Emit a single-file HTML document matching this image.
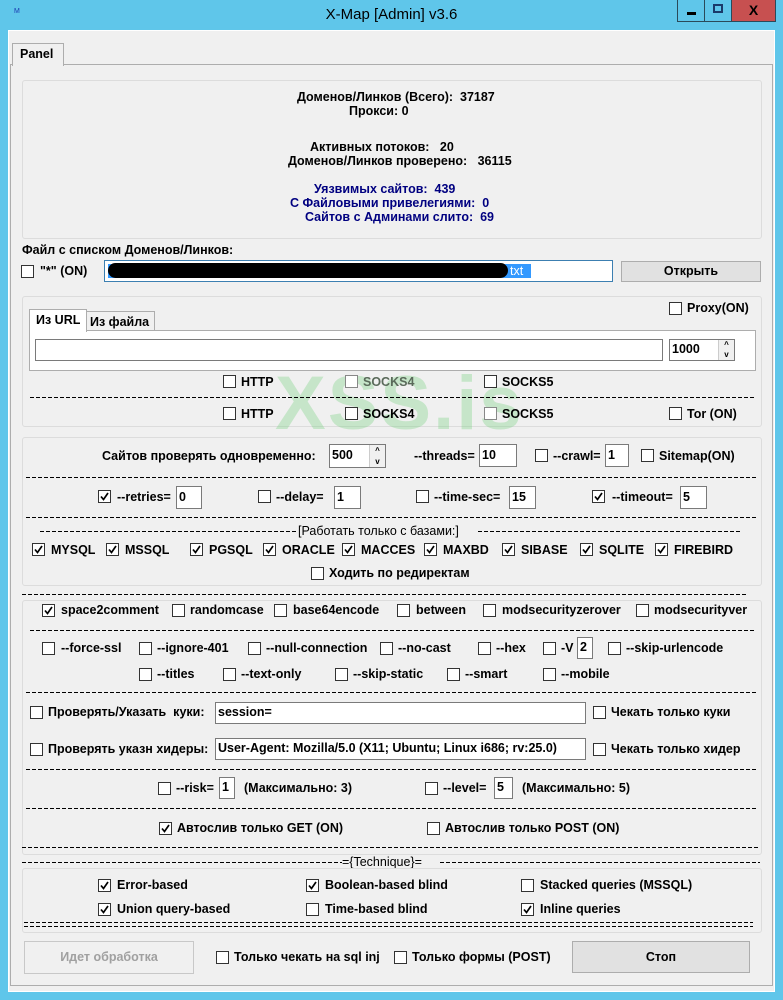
<!DOCTYPE html>
<html><head><meta charset="utf-8"><style>
*{margin:0;padding:0;box-sizing:border-box}
body{width:783px;height:1000px;background:#5fc6ea;position:relative;overflow:hidden;font:bold 12.5px "Liberation Sans","Noto Sans CJK SC",sans-serif;color:#000}
div{position:absolute}
.t{white-space:nowrap;line-height:14px}
.b{color:#000080}
.cb{width:13px;height:13px;border:1px solid #333;background:#fff}
.cb svg{position:absolute;left:0;top:0}
.in{background:#fff;border:1px solid #7a7a7a;line-height:18px;padding-left:2px;white-space:nowrap;overflow:hidden}
.grp{border:1px solid #dcdcdc;border-radius:3px}
.dl{height:1px;background:repeating-linear-gradient(90deg,#000 0 4px,transparent 4px 6px)}
.btn{background:#e1e1e1;border:1px solid #adadad;text-align:center}
.wm{font:bold 76px "Liberation Sans",sans-serif;color:rgba(120,210,130,.35);letter-spacing:2px}
</style></head><body>
<div style="left:14px;top:8px;font:7px 'Liberation Sans';color:#1a3ab0">M</div>
<div class="t" style="left:0;width:783px;top:6px;text-align:center;font:normal 15px 'Liberation Sans',sans-serif;line-height:18px">X-Map [Admin] v3.6</div>
<div style="left:677px;top:0;width:28px;height:22px;border:1px solid #2a4a5a;border-top:none"><div style="left:9px;top:12px;width:9px;height:3px;background:#000"></div></div>
<div style="left:704px;top:0;width:28px;height:22px;border:1px solid #2a4a5a;border-top:none"><div style="left:8px;top:4px;width:10px;height:9px;border:2px solid #1a3a6a"></div></div>
<div style="left:731px;top:0;width:45px;height:22px;background:#c75050;border:1px solid #2a4a5a;border-top:none;color:#000;font:bold 14px 'Liberation Sans';text-align:center;line-height:21px">X</div>
<div style="left:8px;top:30px;width:767px;height:962px;background:#f0f0f0;border:1px solid #fff"></div>
<div style="left:10px;top:64px;width:763px;height:922px;border:1px solid #adadad;background:#f0f0f0"></div>
<div style="left:12px;top:43px;width:52px;height:23px;background:#f0f0f0;border:1px solid #adadad;border-bottom:none"></div>
<div class="t" style="left:20px;top:47px">Panel</div>
<div style="left:16px;top:66px;width:752px;height:916px;background:#f0f0f0"></div>

<div class="grp" style="left:22px;top:80px;width:740px;height:159px"></div>
<div class="t" style="left:297px;top:90px">Доменов/Линков (Всего):&nbsp; 37187</div>
<div class="t" style="left:349px;top:104px">Прокси: 0</div>
<div class="t" style="left:310px;top:140px">Активных потоков:&nbsp;&nbsp; 20</div>
<div class="t" style="left:288px;top:154px">Доменов/Линков проверено:&nbsp;&nbsp; 36115</div>
<div class="t b" style="left:314px;top:182px">Уязвимых сайтов:&nbsp; 439</div>
<div class="t b" style="left:290px;top:196px">С Файловыми привелегиями:&nbsp; 0</div>
<div class="t b" style="left:305px;top:210px">Сайтов с Админами слито:&nbsp; 69</div>

<div class="t" style="left:22px;top:243px">Файл с списком Доменов/Линков:</div>
<div class="cb" style="left:21px;top:265px"></div>
<div class="t" style="left:40px;top:264px">"*" (ON)</div>
<div style="left:104px;top:260px;width:509px;height:22px;background:#fff;border:1px solid #3c7fb1"></div>
<div style="left:108px;top:264px;width:423px;height:14px;background:#3399ff"></div>
<div style="left:108px;top:263px;width:400px;height:15px;background:#000;border-radius:8px"></div>
<div class="t" style="left:510px;top:264px;color:#fff;font-weight:normal">txt</div>
<div class="btn t" style="left:621px;top:261px;width:140px;height:21px;line-height:19px">Открыть</div>

<div class="grp" style="left:22px;top:296px;width:740px;height:131px"></div>
<div class="cb" style="left:669px;top:302px"></div>
<div class="t" style="left:687px;top:301px">Proxy(ON)</div>
<div style="left:29px;top:330px;width:727px;height:41px;background:#fff;border:1px solid #adadad"></div>
<div style="left:86px;top:311px;width:69px;height:20px;background:#f0f0f0;border:1px solid #adadad"></div>
<div class="t" style="left:90px;top:315px">Из файла</div>
<div style="left:29px;top:309px;width:58px;height:23px;background:#fff;border:1px solid #adadad;border-bottom:none"></div>
<div class="t" style="left:36px;top:313px">Из URL</div>
<div class="in" style="left:35px;top:339px;width:628px;height:22px"></div>
<div class="in" style="left:669px;top:339px;width:66px;height:22px;line-height:19px">1000</div>
<div style="left:718px;top:340px;width:16px;height:20px;background:#f0f0f0;border-left:1px solid #ccc;font-size:8px;line-height:10px;text-align:center">^<br>v</div>

<div class="wm" style="left:275px;top:360px">XSS.is</div>
<div class="cb" style="left:223px;top:375px"></div><div class="t" style="left:241px;top:375px">HTTP</div>
<div class="cb" style="left:345px;top:375px;border-color:#888"></div><div class="t" style="left:363px;top:375px;color:#5a6a5a">SOCKS4</div>
<div class="cb" style="left:484px;top:375px"></div><div class="t" style="left:502px;top:375px">SOCKS5</div>
<div class="dl" style="left:30px;top:397px;width:725px"></div>
<div class="cb" style="left:223px;top:407px"></div><div class="t" style="left:241px;top:407px">HTTP</div>
<div class="cb" style="left:345px;top:407px"></div><div class="t" style="left:363px;top:407px">SOCKS4</div>
<div class="cb" style="left:484px;top:407px;border-color:#888"></div><div class="t" style="left:502px;top:407px">SOCKS5</div>
<div class="cb" style="left:669px;top:407px"></div><div class="t" style="left:687px;top:407px">Tor (ON)</div>

<div class="grp" style="left:22px;top:437px;width:740px;height:149px"></div>
<div class="t" style="left:102px;top:449px">Сайтов проверять одновременно:</div>
<div class="in" style="left:329px;top:444px;width:57px;height:24px;line-height:21px">500</div>
<div style="left:369px;top:445px;width:16px;height:22px;background:#f0f0f0;border-left:1px solid #ccc;font-size:8px;line-height:11px;text-align:center">^<br>v</div>
<div class="t" style="left:414px;top:449px">--threads=</div>
<div class="in" style="left:479px;top:444px;width:38px;height:23px;line-height:20px">10</div>
<div class="cb" style="left:535px;top:449px"></div><div class="t" style="left:553px;top:449px">--crawl=</div>
<div class="in" style="left:605px;top:444px;width:24px;height:23px;line-height:20px">1</div>
<div class="cb" style="left:641px;top:449px"></div><div class="t" style="left:659px;top:449px">Sitemap(ON)</div>
<div class="dl" style="left:26px;top:477px;width:730px"></div>

<div class="cb" style="left:98px;top:490px"><svg width="11" height="11"><path d="M2 5.5L4.5 8.5L9 2" stroke="#000" stroke-width="1.7" fill="none"/></svg></div>
<div class="t" style="left:117px;top:490px">--retries=</div>
<div class="in" style="left:176px;top:486px;width:26px;height:23px;line-height:20px">0</div>
<div class="cb" style="left:258px;top:490px"></div><div class="t" style="left:276px;top:490px">--delay=</div>
<div class="in" style="left:334px;top:486px;width:27px;height:23px;line-height:20px">1</div>
<div class="cb" style="left:416px;top:490px"></div><div class="t" style="left:434px;top:490px">--time-sec=</div>
<div class="in" style="left:509px;top:486px;width:27px;height:23px;line-height:20px">15</div>
<div class="cb" style="left:592px;top:490px"><svg width="11" height="11"><path d="M2 5.5L4.5 8.5L9 2" stroke="#000" stroke-width="1.7" fill="none"/></svg></div>
<div class="t" style="left:612px;top:490px">--timeout=</div>
<div class="in" style="left:680px;top:486px;width:27px;height:23px;line-height:20px">5</div>
<div class="dl" style="left:26px;top:517px;width:730px"></div>
<div class="dl" style="left:40px;top:531px;width:258px"></div>
<div class="t" style="left:298px;top:524px;font-weight:normal">[Работать только с базами:]</div>
<div class="dl" style="left:478px;top:531px;width:262px"></div>

<div class="cb" style="left:32px;top:543px"><svg width="11" height="11"><path d="M2 5.5L4.5 8.5L9 2" stroke="#000" stroke-width="1.7" fill="none"/></svg></div><div class="t" style="left:51px;top:543px">MYSQL</div>
<div class="cb" style="left:106px;top:543px"><svg width="11" height="11"><path d="M2 5.5L4.5 8.5L9 2" stroke="#000" stroke-width="1.7" fill="none"/></svg></div><div class="t" style="left:125px;top:543px">MSSQL</div>
<div class="cb" style="left:190px;top:543px"><svg width="11" height="11"><path d="M2 5.5L4.5 8.5L9 2" stroke="#000" stroke-width="1.7" fill="none"/></svg></div><div class="t" style="left:209px;top:543px">PGSQL</div>
<div class="cb" style="left:263px;top:543px"><svg width="11" height="11"><path d="M2 5.5L4.5 8.5L9 2" stroke="#000" stroke-width="1.7" fill="none"/></svg></div><div class="t" style="left:282px;top:543px">ORACLE</div>
<div class="cb" style="left:342px;top:543px"><svg width="11" height="11"><path d="M2 5.5L4.5 8.5L9 2" stroke="#000" stroke-width="1.7" fill="none"/></svg></div><div class="t" style="left:361px;top:543px">MACCES</div>
<div class="cb" style="left:424px;top:543px"><svg width="11" height="11"><path d="M2 5.5L4.5 8.5L9 2" stroke="#000" stroke-width="1.7" fill="none"/></svg></div><div class="t" style="left:443px;top:543px">MAXBD</div>
<div class="cb" style="left:502px;top:543px"><svg width="11" height="11"><path d="M2 5.5L4.5 8.5L9 2" stroke="#000" stroke-width="1.7" fill="none"/></svg></div><div class="t" style="left:521px;top:543px">SIBASE</div>
<div class="cb" style="left:580px;top:543px"><svg width="11" height="11"><path d="M2 5.5L4.5 8.5L9 2" stroke="#000" stroke-width="1.7" fill="none"/></svg></div><div class="t" style="left:599px;top:543px">SQLITE</div>
<div class="cb" style="left:655px;top:543px"><svg width="11" height="11"><path d="M2 5.5L4.5 8.5L9 2" stroke="#000" stroke-width="1.7" fill="none"/></svg></div><div class="t" style="left:674px;top:543px">FIREBIRD</div>
<div class="cb" style="left:311px;top:567px"></div><div class="t" style="left:329px;top:566px">Ходить по редиректам</div>
<div class="dl" style="left:22px;top:594px;width:726px"></div>

<div class="grp" style="left:22px;top:600px;width:740px;height:255px"></div>
<div class="cb" style="left:42px;top:604px"><svg width="11" height="11"><path d="M2 5.5L4.5 8.5L9 2" stroke="#000" stroke-width="1.7" fill="none"/></svg></div><div class="t" style="left:61px;top:603px">space2comment</div>
<div class="cb" style="left:172px;top:604px"></div><div class="t" style="left:190px;top:603px">randomcase</div>
<div class="cb" style="left:274px;top:604px"></div><div class="t" style="left:293px;top:603px">base64encode</div>
<div class="cb" style="left:397px;top:604px"></div><div class="t" style="left:416px;top:603px">between</div>
<div class="cb" style="left:483px;top:604px"></div><div class="t" style="left:502px;top:603px">modsecurityzerover</div>
<div class="cb" style="left:636px;top:604px"></div><div class="t" style="left:654px;top:603px">modsecurityver</div>
<div class="dl" style="left:30px;top:630px;width:725px"></div>
<div class="cb" style="left:42px;top:642px"></div><div class="t" style="left:61px;top:641px">--force-ssl</div>
<div class="cb" style="left:139px;top:642px"></div><div class="t" style="left:157px;top:641px">--ignore-401</div>
<div class="cb" style="left:248px;top:642px"></div><div class="t" style="left:266px;top:641px">--null-connection</div>
<div class="cb" style="left:380px;top:642px"></div><div class="t" style="left:398px;top:641px">--no-cast</div>
<div class="cb" style="left:478px;top:642px"></div><div class="t" style="left:496px;top:641px">--hex</div>
<div class="cb" style="left:543px;top:642px"></div><div class="t" style="left:561px;top:641px">-V</div>
<div class="in" style="left:577px;top:637px;width:16px;height:22px;line-height:19px">2</div>
<div class="cb" style="left:608px;top:642px"></div><div class="t" style="left:626px;top:641px">--skip-urlencode</div>
<div class="cb" style="left:139px;top:668px"></div><div class="t" style="left:157px;top:667px">--titles</div>
<div class="cb" style="left:223px;top:668px"></div><div class="t" style="left:241px;top:667px">--text-only</div>
<div class="cb" style="left:335px;top:668px"></div><div class="t" style="left:353px;top:667px">--skip-static</div>
<div class="cb" style="left:447px;top:668px"></div><div class="t" style="left:465px;top:667px">--smart</div>
<div class="cb" style="left:543px;top:668px"></div><div class="t" style="left:561px;top:667px">--mobile</div>
<div class="dl" style="left:26px;top:692px;width:730px"></div>
<div class="cb" style="left:30px;top:706px"></div><div class="t" style="left:48px;top:705px">Проверять/Указать&nbsp; куки:</div>
<div class="in" style="left:215px;top:702px;width:371px;height:22px;line-height:19px">session=</div>
<div class="cb" style="left:593px;top:706px"></div><div class="t" style="left:611px;top:705px">Чекать только куки</div>
<div class="cb" style="left:30px;top:743px"></div><div class="t" style="left:48px;top:742px">Проверять указн хидеры:</div>
<div class="in" style="left:215px;top:738px;width:371px;height:22px;line-height:19px">User-Agent: Mozilla/5.0 (X11; Ubuntu; Linux i686; rv:25.0)</div>
<div class="cb" style="left:593px;top:743px"></div><div class="t" style="left:611px;top:742px">Чекать только хидер</div>
<div class="dl" style="left:26px;top:769px;width:730px"></div>
<div class="cb" style="left:158px;top:782px"></div><div class="t" style="left:176px;top:781px">--risk=</div>
<div class="in" style="left:219px;top:777px;width:16px;height:22px;line-height:19px">1</div>
<div class="t" style="left:244px;top:781px">(Максимально: 3)</div>
<div class="cb" style="left:425px;top:782px"></div><div class="t" style="left:443px;top:781px">--level=</div>
<div class="in" style="left:494px;top:777px;width:19px;height:22px;line-height:19px">5</div>
<div class="t" style="left:522px;top:781px">(Максимально: 5)</div>
<div class="dl" style="left:26px;top:808px;width:730px"></div>
<div class="cb" style="left:159px;top:822px"><svg width="11" height="11"><path d="M2 5.5L4.5 8.5L9 2" stroke="#000" stroke-width="1.7" fill="none"/></svg></div><div class="t" style="left:177px;top:821px">Автослив только GET (ON)</div>
<div class="cb" style="left:427px;top:822px"></div><div class="t" style="left:445px;top:821px">Автослив только POST (ON)</div>
<div class="dl" style="left:22px;top:847px;width:736px"></div>
<div class="dl" style="left:22px;top:862px;width:320px"></div>
<div class="t" style="left:342px;top:855px;font-weight:normal">={Technique}=</div>
<div class="dl" style="left:440px;top:862px;width:320px"></div>

<div class="grp" style="left:22px;top:868px;width:740px;height:65px"></div>
<div class="cb" style="left:98px;top:879px"><svg width="11" height="11"><path d="M2 5.5L4.5 8.5L9 2" stroke="#000" stroke-width="1.7" fill="none"/></svg></div><div class="t" style="left:117px;top:878px">Error-based</div>
<div class="cb" style="left:306px;top:879px"><svg width="11" height="11"><path d="M2 5.5L4.5 8.5L9 2" stroke="#000" stroke-width="1.7" fill="none"/></svg></div><div class="t" style="left:325px;top:878px">Boolean-based blind</div>
<div class="cb" style="left:521px;top:879px"></div><div class="t" style="left:540px;top:878px">Stacked queries (MSSQL)</div>
<div class="cb" style="left:98px;top:903px"><svg width="11" height="11"><path d="M2 5.5L4.5 8.5L9 2" stroke="#000" stroke-width="1.7" fill="none"/></svg></div><div class="t" style="left:117px;top:902px">Union query-based</div>
<div class="cb" style="left:306px;top:903px"></div><div class="t" style="left:325px;top:902px">Time-based blind</div>
<div class="cb" style="left:521px;top:903px"><svg width="11" height="11"><path d="M2 5.5L4.5 8.5L9 2" stroke="#000" stroke-width="1.7" fill="none"/></svg></div><div class="t" style="left:540px;top:902px">Inline queries</div>
<div class="dl" style="left:24px;top:922px;width:729px"></div>
<div class="dl" style="left:24px;top:926px;width:729px"></div>

<div class="btn t" style="left:24px;top:941px;width:170px;height:33px;line-height:31px;color:#a0a0a0;background:#f0f0f0;border-color:#c8c8c8">Идет обработка</div>
<div class="cb" style="left:216px;top:951px"></div><div class="t" style="left:234px;top:950px">Только чекать на sql inj</div>
<div class="cb" style="left:394px;top:951px"></div><div class="t" style="left:412px;top:950px">Только формы (POST)</div>
<div class="btn t" style="left:572px;top:941px;width:178px;height:32px;line-height:30px">Стоп</div>
</body></html>
